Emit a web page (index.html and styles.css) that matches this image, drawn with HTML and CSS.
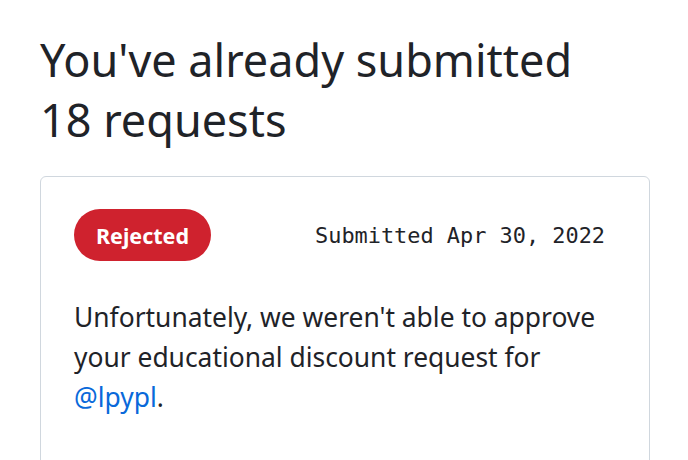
FILE: index.html
```html
<!DOCTYPE html>
<html>
<head>
<meta charset="utf-8">
<link rel="stylesheet" href="styles.css">
</head>
<body>
<main class="page">
  <h1 class="title">You've already submitted 18 requests</h1>
  <section class="card">
    <div class="card-head">
      <span class="badge">Rejected</span>
      <span class="date">Submitted Apr 30, 2022</span>
    </div>
    <p class="message">Unfortunately, we weren't able to approve your educational discount request for <a class="link" href="#">@lpypl</a>.</p>
  </section>
</main>
</body>
</html>
```
FILE: styles.css
```css
html, body {
  margin: 0;
  padding: 0;
  background: #ffffff;
}
body {
  font-family: "Noto Sans", "Open Sans", sans-serif;
  color: #1f2328;
}
.page {
  padding: 30px 38px 0 40px;
}
.title {
  margin: 0 0 26px 0;
  font-size: 45px;
  line-height: 60px;
  font-weight: 400;
  width: 560px;
}
.card {
  border: 1px solid #d0d7de;
  border-radius: 6px;
  padding: 32px 32px 120px 33px;
}
.card-head {
  display: flex;
  justify-content: space-between;
  align-items: center;
}
.badge {
  display: inline-flex;
  align-items: center;
  height: 52px;
  padding: 0 22px;
  border-radius: 26px;
  background: #cf222e;
  color: #ffffff;
  font-weight: 700;
  font-size: 21.5px;
}
.date {
  font-family: "DejaVu Sans Mono", "Liberation Mono", monospace;
  font-size: 21.9px;
  margin-right: 12px;
}
.message {
  margin: 36px 0 0 0;
  font-size: 26.4px;
  line-height: 40px;
  max-width: 530px;
}
.link {
  color: #0969da;
  text-decoration: none;
}
```
